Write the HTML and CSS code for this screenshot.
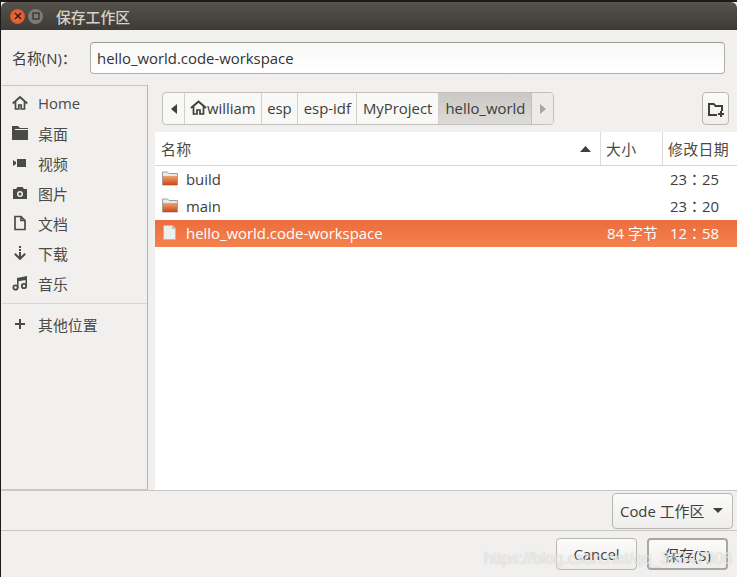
FILE: index.html
```html
<!DOCTYPE html>
<html>
<head>
	<meta charset="utf-8">
	<title>保存工作区</title>
	<link rel="stylesheet" href="styles.css">
</head>
<body>
<div class="dialog">
	<div class="titlebar">
		<span class="wbtn wbtn_close">
			<svg width="8" height="8" viewBox="0 0 8 8"><path d="M1 1l6 6M7 1l-6 6" stroke="#3a1a10" stroke-width="1.6"/></svg>
		</span>
		<span class="wbtn wbtn_max">
			<svg width="8" height="8" viewBox="0 0 8 8"><rect x="1" y="1" width="6" height="6" fill="none" stroke="#35342f" stroke-width="1.3"/></svg>
		</span>
		<span class="title">保存工作区</span>
	</div>

	<div class="name_row">
		<label class="name_label">名称(N)：</label>
		<div class="name_input">hello_world.code-workspace</div>
	</div>

	<div class="middle">
		<div class="sidebar">
			<div class="place">
				<svg class="pi" viewBox="0 0 16 16"><path d="M.8 8.500L8 2l7.200 6.500" fill="none" stroke="#4a4a48" stroke-width="2"/><path d="M3.500 7v7h3.300v-4h2.400v4h3.300V7" fill="none" stroke="#4a4a48" stroke-width="1.700"/></svg>
				<span>Home</span>
			</div>
			<div class="place">
				<svg class="pi" viewBox="0 0 16 16"><path d="M0 1h6l2 2h8v12H0z" fill="#4a4a48"/><rect x="3" y="4" width="13" height="1" fill="#f1f0ee"/></svg>
				<span>桌面</span>
			</div>
			<div class="place">
				<svg class="pi" viewBox="0 0 16 16"><path d="M5 4h9v8H5zM1 5l3 2v2l-3 2z" fill="#4a4a48"/></svg>
				<span>视频</span>
			</div>
			<div class="place">
				<svg class="pi" viewBox="0 0 16 16"><path d="M1 4h3l1.500-2h5L12 4h3v10H1z" fill="#4a4a48"/><circle cx="8" cy="9" r="3" fill="#f1f0ee"/><circle cx="8" cy="9" r="1.500" fill="#4a4a48"/></svg>
				<span>图片</span>
			</div>
			<div class="place">
				<svg class="pi" viewBox="0 0 16 16"><path d="M3 1.500h6l4 4v9H3z M9 1.500v4h4" fill="none" stroke="#4a4a48" stroke-width="1.700"/></svg>
				<span>文档</span>
			</div>
			<div class="place">
				<svg class="pi" viewBox="0 0 16 16"><path d="M7 1h2v2H7zM7 4h2v2H7z" fill="#4a4a48"/><path d="M8 7v6.500M2.800 8.800L8 13.800l5.200-5" fill="none" stroke="#4a4a48" stroke-width="2"/></svg>
				<span>下载</span>
			</div>
			<div class="place">
				<svg class="pi" viewBox="0 0 16 16"><path d="M5 3l10-2v10h-1.500V5L6.500 6.300V13H5z" fill="#4a4a48"/><circle cx="3.500" cy="12.500" r="2.200" fill="none" stroke="#4a4a48" stroke-width="1.800"/><circle cx="12" cy="11" r="2.200" fill="none" stroke="#4a4a48" stroke-width="1.800"/></svg>
				<span>音乐</span>
			</div>
			<div class="side_sep"></div>
			<div class="place">
				<svg class="pi" viewBox="0 0 16 16"><path d="M7 3h2v4h4v2H9v4H7V9H3V7h4z" fill="#4a4a48"/></svg>
				<span>其他位置</span>
			</div>
		</div>

		<div class="main">
			<div class="path_row">
				<div class="pathbar">
					<div class="crumb crumb_arrow">
						<svg width="6" height="10" viewBox="0 0 6 10"><path d="M6 0v10L0 5z" fill="#3e3e3c"/></svg>
					</div>
					<div class="crumb crumb_home">
						<svg width="17" height="15" viewBox="0 0 17 15"><path d="M1 8L8.500 1.500 16 8" fill="none" stroke="#3e3e3c" stroke-width="2"/><path d="M3.500 6.500v7.500h3.500v-4h3v4h3.500V6.500" fill="none" stroke="#3e3e3c" stroke-width="1.700"/></svg>william
					</div>
					<div class="crumb">esp</div>
					<div class="crumb">esp-idf</div>
					<div class="crumb">MyProject</div>
					<div class="crumb crumb_cur">hello_world</div>
					<div class="crumb crumb_arrow crumb_end">
						<svg width="6" height="10" viewBox="0 0 6 10"><path d="M0 0v10l6-5z" fill="#a5a5a3"/></svg>
					</div>
				</div>
				<div class="newfolder">
					<svg width="18" height="16" viewBox="0 0 18 16"><path d="M1 2h6l2 2h7v6h-2V6H8L6.500 4H3v9h7v2H1z" fill="#3e3e3c"/><path d="M13 10h2v2h2v2h-2v2h-2v-2h-2v-2h2z" fill="#3e3e3c"/></svg>
				</div>
			</div>

			<div class="files">
				<div class="file_head">
					<div class="col_name head_cell">名称<svg class="sort" width="11" height="6" viewBox="0 0 11 6"><path d="M0 6L5.500 0 11 6z" fill="#3e3e3c"/></svg></div>
					<div class="col_size head_cell">大小</div>
					<div class="col_date head_cell">修改日期</div>
				</div>
				<div class="file_row">
					<div class="col_name">
						<svg class="fi" viewBox="0 0 16 15"><use href="#folder"/></svg>build
					</div>
					<div class="col_size"></div>
					<div class="col_date">23：25</div>
				</div>
				<div class="file_row">
					<div class="col_name">
						<svg class="fi" viewBox="0 0 16 15"><use href="#folder"/></svg>main
					</div>
					<div class="col_size"></div>
					<div class="col_date">23：20</div>
				</div>
				<div class="file_row file_sel">
					<div class="col_name">
						<svg class="fi" viewBox="0 0 16 15"><path d="M1.500 .5h9l3 3v11h-12z" fill="#eeeeec" stroke="#b9b9b6"/><path d="M10.500 .5v3h3" fill="#d5d5d2" stroke="#b9b9b6"/></svg>hello_world.code-workspace
					</div>
					<div class="col_size">84 字节</div>
					<div class="col_date">12：58</div>
				</div>
			</div>
		</div>
	</div>

	<div class="filter_row">
		<div class="btn filter_btn">Code 工作区<svg width="10" height="5" viewBox="0 0 10 5"><path d="M0 0h10L5 5z" fill="#3e3e3c"/></svg></div>
	</div>

	<div class="action_row">
		<div class="btn action_btn">Cancel</div>
		<div class="btn action_btn action_save">保存(S)</div>
	</div>
</div>

<div class="watermark">https://blog.csdn.net/qq_36347006</div>

<svg class="defs" width="0" height="0">
	<defs>
		<linearGradient id="fold" x1="0" y1="0" x2="0" y2="1">
			<stop offset="0" stop-color="#eea070"/>
			<stop offset="1" stop-color="#cc4712"/>
		</linearGradient>
		<symbol id="folder" viewBox="0 0 16 15">
			<path d="M.5 1h5l1.500 1.500h8.500V14H.5z" fill="#e8e8e6" stroke="#9f9f9c"/>
			<rect x="1" y="5" width="14" height="9" fill="url(#fold)"/>
		</symbol>
	</defs>
</svg>
</body>
</html>
```

FILE: styles.css
```css
html, body {
	margin: 0;
	height: 100%;
	overflow: hidden;
	background: #1c1b19;
	font-family: "Open Sans", "Noto Sans CJK SC", sans-serif;
	font-size: 14.9px;
	color: #3d3d3b;
}
.dialog {
	display: flex;
	flex-direction: column;
	height: 575px;
	margin: 2px 0 0 1px;
	background: #f1f0ee;
}
.titlebar {
	display: flex;
	align-items: center;
	flex: none;
	height: 28px;
	padding-left: 9px;
	background: linear-gradient(#57534b, #3d3b36);
	border-radius: 6px 6px 0 0;
}
.wbtn {
	display: flex;
	align-items: center;
	justify-content: center;
	width: 15px;
	height: 15px;
	margin-right: 3px;
	border-radius: 50%;
}
.wbtn_close {
	background: radial-gradient(#f0764a, #d8491f);
}
.wbtn_max {
	background: #7d7b73;
}
.title {
	margin: 1px 0 0 10px;
	font-size: 14.8px;
	font-weight: 500;
	color: #d6d3cb;
}

/* file name entry */
.name_row {
	display: flex;
	align-items: center;
	flex: none;
	height: 55px;
	padding: 0 12px 0 11px;
}
.name_label {
	width: 78px;
}
.name_input {
	flex: 1;
	height: 30px;
	line-height: 31px;
	padding-left: 6px;
	background: linear-gradient(#f8f8f7, #ffffff);
	border: 1px solid #b0aeaa;
	border-top-color: #9c9a96;
	border-radius: 4px;
	color: #333;
}

.middle {
	display: flex;
	flex: none;
	height: 405px;
}
.sidebar {
	flex: none;
	width: 146px;
	margin-left: 1px;
	padding-top: 2px;
	border-top: 1px solid #c9c7c3;
	border-right: 1px solid #b4b2ae;
	border-bottom: 1px solid #c9c7c3;
	box-sizing: border-box;
	height: 405px;
}
.place {
	display: flex;
	align-items: center;
	height: 30px;
	padding-left: 10px;
	color: #4a4a48;
}
.pi {
	flex: none;
	width: 16px;
	height: 16px;
	margin-right: 10px;
}
.side_sep {
	height: 1px;
	margin: 5px 0 5px;
	background: #d8d6d2;
}

.main {
	display: flex;
	flex-direction: column;
	flex: 1;
	padding-left: 7px;
	min-width: 0;
}
.path_row {
	display: flex;
	justify-content: space-between;
	flex: none;
	height: 47px;
	padding: 7px 8px 0 7px;
	box-sizing: border-box;
}
.pathbar {
	display: flex;
	height: 33px;
	background: #f8f8f7;
	border: 1px solid #c2c0bc;
	border-radius: 4px;
	box-sizing: border-box;
}
.crumb {
	display: flex;
	align-items: center;
	padding: 0 5.5px 2px;
	border-right: 1px solid #d2d0cc;
	color: #3d3d3b;
}
.crumb_arrow {
	width: 21px;
	padding: 0;
	justify-content: center;
}
.crumb_home {
	padding: 0 5px 2px 5px;
}
.crumb_cur {
	padding: 0 6px 2px 6.5px;
	background: linear-gradient(#c9c8c5, #dddcd9);
	border-right: 1px solid #c2c0bc;
}
.crumb_end {
	background: #ecebe9;
	border-right: 0;
	border-radius: 0 4px 4px 0;
}
.newfolder {
	display: flex;
	align-items: center;
	justify-content: center;
	width: 27px;
	height: 33px;
	background: linear-gradient(#fbfbfa, #f0efed);
	border: 1px solid #b8b6b2;
	border-radius: 4px;
	box-sizing: border-box;
}

/* file list */
.files {
	flex: 1;
	background: #fff;
}
.file_head {
	display: flex;
	height: 34px;
	border-bottom: 1px solid #d8d6d2;
	box-sizing: border-box;
}
.head_cell {
	display: flex;
	align-items: center;
	letter-spacing: .4px;
	color: #4a4a48;
}
.head_cell + .head_cell {
	border-left: 1px solid #dddcd9;
}
.file_row {
	display: flex;
	align-items: center;
	height: 27px;
	padding-bottom: 2px;
	box-sizing: border-box;
}
.file_sel {
	background: linear-gradient(#ec6d3c, #f5814f);
	color: #fff;
}
.col_name {
	display: flex;
	align-items: center;
	width: 445px;
	padding-left: 7px;
	box-sizing: border-box;
}
.col_size {
	width: 62px;
	padding-left: 7px;
	box-sizing: border-box;
}
.col_date {
	flex: 1;
	padding-left: 6px;
	box-sizing: border-box;
}
.head_cell.col_name {
	padding-left: 6px;
}
.head_cell.col_size,
.head_cell.col_date {
	padding-left: 5px;
}
/* TC face keeps the colon centred in its cell */
.file_row .col_date {
	padding-left: 8px;
	font-family: "Open Sans", "Noto Sans CJK TC", sans-serif;
}
.sort {
	margin-left: auto;
	margin-right: 9px;
}
.fi {
	flex: none;
	width: 16px;
	height: 15px;
	margin-right: 8px;
}

.filter_row {
	display: flex;
	justify-content: flex-end;
	align-items: center;
	flex: none;
	height: 41px;
	padding-right: 4px;
	border-top: 1px solid #c9c7c3;
	border-bottom: 1px solid #c9c7c3;
	box-sizing: border-box;
}
.btn {
	display: flex;
	align-items: center;
	justify-content: center;
	background: linear-gradient(#fbfbfa, #efeeec);
	border: 1px solid #b8b6b2;
	border-radius: 4px;
	box-sizing: border-box;
}
.filter_btn {
	justify-content: flex-start;
	width: 121px;
	height: 36px;
	padding-left: 7px;
}
.filter_btn svg {
	margin-left: 9px;
}
.action_row {
	display: flex;
	justify-content: flex-end;
	gap: 10px;
	flex: none;
	padding: 7px 9px 0 0;
}
.action_btn {
	width: 81px;
	height: 32px;
}
.action_save {
	border: 2px solid #a9a7a3;
}

/* site stamp across the lower right corner */
.watermark {
	position: absolute;
	left: 484px;
	top: 549px;
	font-family: "Liberation Sans", sans-serif;
	font-size: 16.2px;
	color: rgba(255, 255, 255, .72);
	text-shadow: 0 0 1px rgba(120, 120, 120, .5);
	white-space: nowrap;
}
.defs {
	position: absolute;
}
```
